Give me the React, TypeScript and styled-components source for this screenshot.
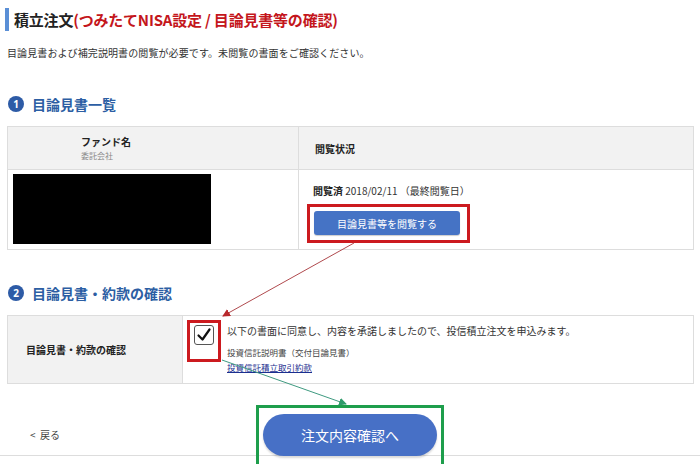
import React from "react";
import styled, {createGlobalStyle} from "styled-components";

const GlobalStyle = createGlobalStyle`
  html, body {
    margin: 0;
    padding: 0;
    background: #ffffff;
  }
  body {
    font-family: "Noto Sans CJK JP", "Noto Sans", "Liberation Sans", sans-serif;
    color: #333333;
  }
`

const Page = styled.div`
  position: relative;
  width: 700px;
  height: 464px;
  overflow: hidden;
  box-sizing: border-box;
  padding: 0 6px 0 7px;
`

const Title = styled.h1`
  margin: 8px 0 0 -2px;
  height: 23px;
  display: flex;
  align-items: center;
  padding-left: 5px;
  border-left: 4px solid #5a8fd6;
  font-size: 15px;
  font-weight: 700;
  color: #222222;
  letter-spacing: -0.2px;
  .sub {
    color: #c4161c;
  }
`

const Lead = styled.p`
  margin: 15px 0 0;
  font-size: 10px;
  line-height: 14px;
  letter-spacing: 0.1px;
  color: #333333;
`

const SectionHead = styled.h2<{$top: number}>`
  margin: ${p => p.$top}px 0 0 1px;
  height: 16px;
  display: flex;
  align-items: center;
  gap: 8px;
  font-size: 14px;
  font-weight: 700;
  color: #2c5ea3;
`

const Num = styled.span`
  width: 16px;
  height: 16px;
  border-radius: 50%;
  background: #2d5ba6;
  color: #ffffff;
  font-size: 10px;
  font-weight: 700;
  display: flex;
  align-items: center;
  justify-content: center;
  font-family: "Noto Sans", sans-serif;
`

const Table = styled.div<{$cols: string}>`
  margin-top: 14px;
  display: grid;
  grid-template-columns: ${p => p.$cols};
  border: 1px solid #dddddd;
  font-size: 10px;
`

const HeadCell = styled.div<{$pad: number; $divider?: boolean}>`
  height: 42px;
  background: #f2f2f2;
  border-bottom: 1px solid #dddddd;
  ${p => p.$divider ? "border-left: 1px solid #dddddd;" : ""}
  padding-left: ${p => p.$pad}px;
  display: flex;
  flex-direction: column;
  justify-content: center;
  font-weight: 700;
  color: #222222;
  small {
    font-size: 8px;
    font-weight: 400;
    color: #888888;
    line-height: 13px;
  }
  span {
    line-height: 15px;
  }
`

const Cell = styled.div<{$divider?: boolean}>`
  ${p => p.$divider ? "border-left: 1px solid #dddddd;" : ""}
`

const FundCell = styled(Cell)`
  padding: 4px 5px;
  height: 70px;
`

const Redacted = styled.div`
  width: 198px;
  height: 70px;
  background: #000000;
`

const StatusCell = styled(Cell)`
  padding: 14px 14px 6px;
`

const Status = styled.div`
  line-height: 14px;
  color: #333333;
  b {
    color: #222222;
  }
`

const RedMark = styled.div`
  display: inline-block;
  border: 3px solid #cc1a1f;
`

const ViewMark = styled(RedMark)`
  margin: 6px 0 0 -6px;
  padding: 4px 7px 5px 4px;
`

const Button = styled.button`
  border: none;
  background: #4573c5;
  color: #ffffff;
  font-family: inherit;
  font-size: 10px;
  border-radius: 3px;
  width: 146px;
  height: 24px;
  box-shadow: 0 1px 1px rgba(0, 0, 0, 0.2);
`

const LabelCell = styled.div`
  background: #f2f2f2;
  height: 67px;
  display: flex;
  align-items: center;
  padding-left: 18px;
  font-weight: 700;
  color: #222222;
`

const AgreeCell = styled(Cell)`
  display: flex;
  align-items: flex-start;
  gap: 6px;
  padding: 4px 0 0 4px;
`

const CheckMark = styled(RedMark)`
  padding: 2px 4px 14px;
`

const Box = styled.div`
  width: 20px;
  height: 20px;
  box-sizing: border-box;
  border: 1px solid #555555;
  border-radius: 3px;
  background: #ffffff;
  display: flex;
  align-items: center;
  justify-content: center;
`

const AgreeText = styled.div`
  padding-top: 4px;
  p {
    margin: 0;
    line-height: 14px;
  }
  .docs {
    margin-top: 8px;
    font-size: 8.5px;
    line-height: 13px;
    color: #444444;
  }
  a {
    font-size: 8.5px;
    line-height: 13px;
    color: #1b2f8f;
    text-decoration: underline;
  }
`

const Footer = styled.div`
  margin: 21px -6px 0 -7px;
  height: 50px;
  border-bottom: 1px solid #dddddd;
  display: grid;
  grid-template-columns: 1fr auto 1fr;
  align-items: start;
`

const Back = styled.a`
  margin: 22px 0 0 30px;
  font-size: 10px;
  color: #444444;
  white-space: pre;
`

const GreenMark = styled.div`
  border: 3px solid #1e9e4c;
  padding: 6px 4px 0;
  height: 54px;
  position: relative;
  z-index: 1;
`

const Primary = styled.button`
  width: 174px;
  height: 42px;
  border: none;
  border-radius: 21px;
  background: #4770c6;
  color: #ffffff;
  font-family: inherit;
  font-size: 14px;
  box-shadow: 0 2px 2px rgba(0, 0, 0, 0.15);
`

const Arrows = styled.svg`
  position: absolute;
  left: 0;
  top: 0;
  pointer-events: none;
  z-index: 2;
`

const App = () => {
  return (
    <>
      <GlobalStyle/>
      <Page>
        <Title>積立注文<span className="sub">(つみたてNISA設定 / 目論見書等の確認)</span></Title>
        <Lead>目論見書および補完説明書の閲覧が必要です。未閲覧の書面をご確認ください。</Lead>

        <SectionHead $top={36}><Num>1</Num>目論見書一覧</SectionHead>
        <Table $cols="290px 1fr">
          <HeadCell $pad={73}>
            <span>ファンド名</span>
            <small>委託会社</small>
          </HeadCell>
          <HeadCell $pad={16} $divider>
            <span>閲覧状況</span>
          </HeadCell>
          <FundCell><Redacted/></FundCell>
          <StatusCell $divider>
            <Status><b>閲覧済</b> 2018/02/11 （最終閲覧日）</Status>
            <ViewMark><Button>目論見書等を閲覧する</Button></ViewMark>
          </StatusCell>
        </Table>

        <SectionHead $top={35}><Num>2</Num>目論見書・約款の確認</SectionHead>
        <Table $cols="174px 1fr">
          <LabelCell>目論見書・約款の確認</LabelCell>
          <AgreeCell $divider>
            <CheckMark>
              <Box>
                <svg width="16" height="16" viewBox="0 0 16 16">
                  <path d="M2.5 8.5 L6.5 12.5 L13.5 2.5" fill="none" stroke="#111111" strokeWidth="2.2" strokeLinecap="round" strokeLinejoin="round"/>
                </svg>
              </Box>
            </CheckMark>
            <AgreeText>
              <p>以下の書面に同意し、内容を承諾しましたので、投信積立注文を申込みます。</p>
              <p className="docs">投資信託説明書（交付目論見書）</p>
              <a href="#">投資信託積立取引約款</a>
            </AgreeText>
          </AgreeCell>
        </Table>

        <Footer>
          <Back>{"<  戻る"}</Back>
          <GreenMark><Primary>注文内容確認へ</Primary></GreenMark>
          <div/>
        </Footer>

        <Arrows width="700" height="464" viewBox="0 0 700 464">
          <defs>
            <marker id="redHead" markerWidth="8" markerHeight="8" refX="7" refY="4" orient="auto" markerUnits="userSpaceOnUse">
              <path d="M0 0 L8 4 L0 8 Z" fill="#b8282c"/>
            </marker>
            <marker id="greenHead" markerWidth="8" markerHeight="8" refX="7" refY="4" orient="auto" markerUnits="userSpaceOnUse">
              <path d="M0 0 L8 4 L0 8 Z" fill="#2f9a6a"/>
            </marker>
          </defs>
          <line x1="354" y1="243" x2="223" y2="316" stroke="#b04a4e" strokeWidth="1" markerEnd="url(#redHead)"/>
          <line x1="222" y1="360" x2="346" y2="404" stroke="#3f9a80" strokeWidth="1" markerEnd="url(#greenHead)"/>
        </Arrows>
      </Page>
    </>
  );
}

export default App;
